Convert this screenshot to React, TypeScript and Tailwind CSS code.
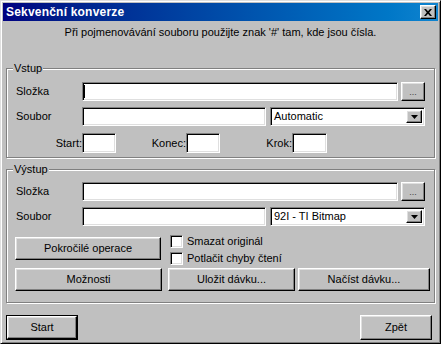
import type { ReactNode } from "react";

const raised =
  "border border-t-white border-l-white border-r-black border-b-black shadow-[inset_-1px_-1px_0_#808080,inset_1px_1px_0_#dfdfdf] bg-[#c0c0c0]";
const sunken =
  "border border-t-[#808080] border-l-[#808080] border-r-white border-b-white shadow-[inset_1px_1px_0_#000,inset_-1px_-1px_0_#dfdfdf] bg-white";

function Group({ label, className, children }: { label: string; className?: string; children: ReactNode }) {
  return (
    <div className={`relative mx-[3px] border border-[#808080] shadow-[inset_1px_1px_0_#fff,1px_1px_0_#fff] ${className ?? ""}`}>
      <span className="absolute left-[6px] -top-[7px] px-[1px] bg-[#c0c0c0] leading-[13px]">{label}</span>
      {children}
    </div>
  );
}

function Button({ label, className }: { label: string; className?: string }) {
  return <div className={`${raised} flex items-center justify-center ${className ?? ""}`}>{label}</div>;
}

function Combo({ value, className }: { value: string; className?: string }) {
  return (
    <div className={`${sunken} flex items-center p-[2px] ${className ?? ""}`}>
      <span className="flex-1 pl-[1px]">{value}</span>
      <div className={`${raised} w-[16px] h-full flex items-center justify-center`}>
        <svg width="7" height="4" viewBox="0 0 7 4">
          <polygon points="0,0 7,0 3.5,4" fill="#000" />
        </svg>
      </div>
    </div>
  );
}

function Checkbox({ label, className }: { label: string; className?: string }) {
  return (
    <div className={`flex items-center h-[13px] ${className ?? ""}`}>
      <div className={`${sunken} w-[13px] h-[13px]`} />
      <span className="ml-[4px]">{label}</span>
    </div>
  );
}

function PathRow({ label, caret }: { label: string; caret?: boolean }) {
  return (
    <div className="flex items-center h-[19px] pl-[9px]">
      <span className="w-[66px]">{label}</span>
      <div className={`${sunken} w-[316px] h-[19px] flex items-center`}>
        {caret && <span className="ml-[1px] w-px h-[13px] bg-black" />}
      </div>
      <div className={`${raised} ml-[3px] w-[24px] h-[19px] flex items-end justify-center pb-[3px] text-[9px] leading-[9px] text-[#404040]`}>...</div>
    </div>
  );
}

function FileRow({ combo }: { combo: string }) {
  return (
    <div className="flex items-center h-[19px] pl-[9px] mt-[6px]">
      <span className="w-[66px]">Soubor</span>
      <div className={`${sunken} w-[184px] h-[19px]`} />
      <Combo value={combo} className="ml-[4px] w-[155px] h-[19px]" />
    </div>
  );
}

export default function App() {
  return (
    <div className="w-[441px] h-[344px] overflow-hidden bg-[#c0c0c0] font-['Liberation_Sans',Arial,sans-serif] text-[11px] leading-[13px] text-black border border-t-[#dfdfdf] border-l-[#dfdfdf] border-r-black border-b-black shadow-[inset_1px_1px_0_#fff,inset_-1px_-1px_0_#808080] p-[2px] flex flex-col">
      <div className="h-[18px] shrink-0 flex items-center justify-between bg-linear-to-r from-[#000080] to-[#1084d0] pl-[3px] pr-[2px]">
        <span className="font-bold text-white text-[12px] tracking-[0.2px]">Sekvenční konverze</span>
        <div className={`${raised} w-[16px] h-[14px] flex items-center justify-center`}>
          <svg width="8" height="7" viewBox="0 0 8 7">
            <path d="M0 0H2L4 2.3L6 0H8L5.2 3.5L8 7H6L4 4.7L2 7H0L2.8 3.5Z" fill="#000" />
          </svg>
        </div>
      </div>

      <div className="mt-[5px] h-[14px] text-center">Při pojmenovávání souboru použijte znak '#' tam, kde jsou čísla.</div>

      <Group label="Vstup" className="mt-[28px] pt-[13px] pb-[4px]">
        <PathRow label="Složka" caret />
        <FileRow combo="Automatic" />
        <div className="flex items-center h-[20px] mt-[7px]">
          <span className="w-[75px] text-right">Start:</span>
          <div className={`${sunken} w-[34px] h-[20px]`} />
          <span className="w-[70px] text-right">Konec:</span>
          <div className={`${sunken} w-[34px] h-[20px]`} />
          <span className="w-[72px] text-right">Krok:</span>
          <div className={`${sunken} w-[35px] h-[20px]`} />
        </div>
      </Group>

      <Group label="Výstup" className="mt-[11px] pt-[12px] pb-[11px]">
        <PathRow label="Složka" />
        <FileRow combo="92I - TI Bitmap" />
        <div className="flex items-start mt-[9px] pl-[8px]">
          <Button label="Pokročilé operace" className="mt-[2px] w-[146px] h-[23px]" />
          <div className="ml-[9px] flex flex-col">
            <Checkbox label="Smazat originál" />
            <Checkbox label="Potlačit chyby čtení" className="mt-[4px]" />
          </div>
        </div>
        <div className="flex items-center mt-[3px] pl-[8px]">
          <Button label="Možnosti" className="w-[147px] h-[23px]" />
          <Button label="Uložit dávku..." className="ml-[6px] w-[127px] h-[23px]" />
          <Button label="Načíst dávku..." className="ml-[3px] w-[132px] h-[23px]" />
        </div>
      </Group>

      <div className="flex justify-between mt-[12px] pl-[3px] pr-[6px]">
        <div className="border border-black w-[72px] h-[25px] flex">
          <Button label="Start" className="flex-1" />
        </div>
        <Button label="Zpět" className="w-[72px] h-[25px]" />
      </div>
    </div>
  );
}
